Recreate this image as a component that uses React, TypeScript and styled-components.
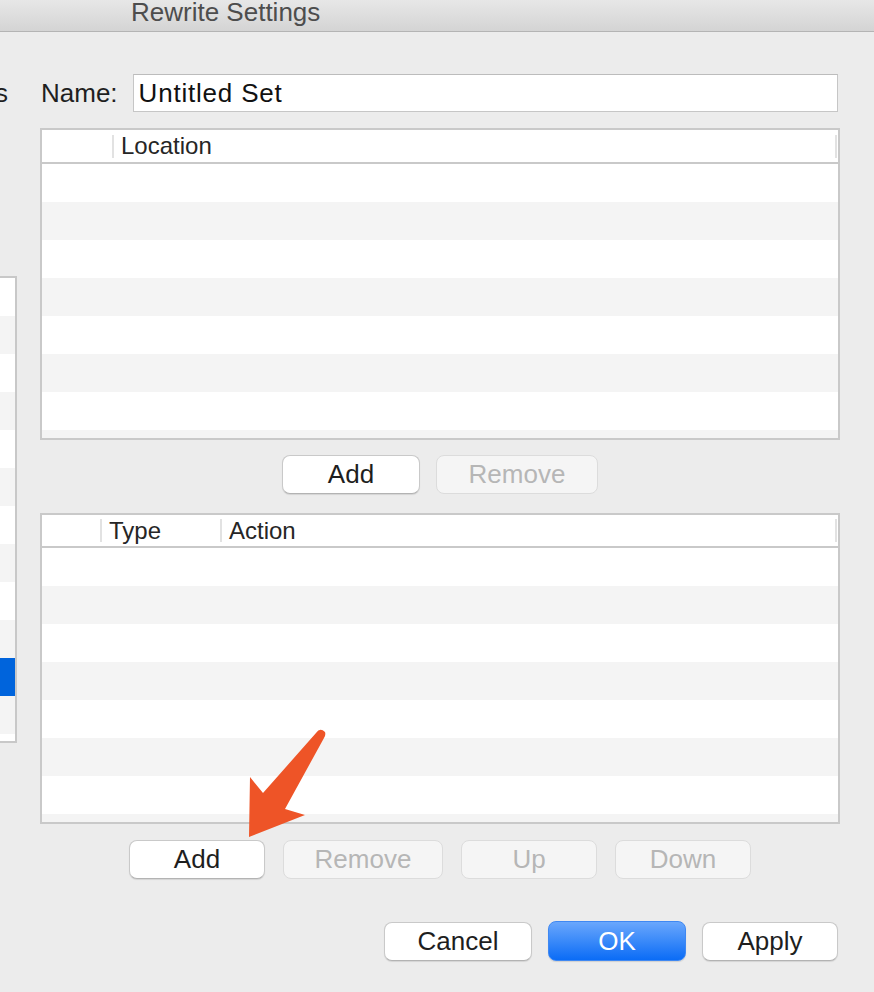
import React from "react";
import styled, { createGlobalStyle, css } from "styled-components";

const Global = createGlobalStyle`
  html, body { margin: 0; padding: 0; background: #ececec; }
  body { font-family: "Liberation Sans", Arial, Helvetica, sans-serif; }
  * { box-sizing: border-box; }
`;

const Window = styled.div`
  position: relative;
  width: 874px;
  height: 992px;
  overflow: hidden;
  background: #ececec;
  display: flex;
  flex-direction: column;
  color: #1f1f1f;
`;

const TitleBar = styled.div`
  height: 32px;
  flex: none;
  background: linear-gradient(#e7e7e7, #d4d4d4);
  border-bottom: 1px solid #b4b4b4;
  padding-left: 131px;
`;

const Title = styled.div`
  font-size: 26px;
  line-height: 24px;
  color: #4d4d4d;
  white-space: nowrap;
`;

const Body = styled.div`
  flex: 1;
  display: flex;
  align-items: flex-start;
`;

const Sidebar = styled.div`
  width: 17px;
  flex: none;
  display: flex;
  flex-direction: column;
  padding-top: 42px;
`;

const SidebarLabel = styled.div`
  width: 8px;
  height: 38px;
  font-size: 26px;
  line-height: 38px;
  text-align: right;
  white-space: nowrap;
  direction: rtl;
`;

const SourceList = styled.div`
  margin-top: 164px;
  width: 17px;
  height: 467px;
  background: #fff;
  border: 2px solid #c8c8c8;
  border-left: none;
  overflow: hidden;
`;

const ListRow = styled.div<{ $alt?: boolean; $selected?: boolean }>`
  height: 38px;
  background: ${(p) => (p.$selected ? "#0064dc" : p.$alt ? "#f4f4f4" : "#ffffff")};
`;

const Main = styled.div`
  margin-left: 23px;
  width: 800px;
  flex: none;
  display: flex;
  flex-direction: column;
  padding-top: 42px;
`;

const NameRow = styled.div`
  display: flex;
  align-items: center;
  height: 38px;
  gap: 15px;
  padding-right: 2px;
`;

const FieldLabel = styled.label`
  font-size: 26px;
  line-height: 38px;
  padding-left: 1px;
  color: #1f1f1f;
`;

const TextField = styled.div`
  flex: 1;
  height: 38px;
  background: #fff;
  border: 1px solid #c6c6c6;
  border-top-color: #bcbcbc;
  padding: 1px 5px 0;
  font-size: 26px;
  line-height: 35px;
  letter-spacing: 0.8px;
  color: #111;
`;

const Table = styled.div<{ $top: number; $height: number }>`
  margin-top: ${(p) => p.$top}px;
  width: 800px;
  height: ${(p) => p.$height}px;
  border: 2px solid #c9c9c9;
  background: #fff;
  display: flex;
  flex-direction: column;
  overflow: hidden;
`;

const Header = styled.div<{ $height: number }>`
  height: ${(p) => p.$height}px;
  flex: none;
  display: flex;
  align-items: center;
  background: #fff;
  border-bottom: 2px solid #c9c9c9;
`;

const HeaderCell = styled.div<{ $width?: number }>`
  ${(p) =>
    p.$width !== undefined
      ? css`
          width: ${p.$width}px;
          flex: none;
        `
      : css`
          flex: 1;
        `}
  font-size: 24px;
  line-height: 32px;
  color: #262626;
  padding-left: 7px;
  white-space: nowrap;
`;

const Spacer = styled.div<{ $width: number }>`
  width: ${(p) => p.$width}px;
  flex: none;
`;

const Separator = styled.div`
  width: 2px;
  height: 23px;
  flex: none;
  background: #e2e2e2;
`;

const TableBody = styled.div`
  flex: 1;
  overflow: hidden;
`;

const TableRow = styled.div<{ $alt?: boolean }>`
  height: 38px;
  background: ${(p) => (p.$alt ? "#f4f4f4" : "#ffffff")};
`;

const ButtonRow = styled.div<{ $top: number; $gap: number; $align?: string }>`
  margin-top: ${(p) => p.$top}px;
  display: flex;
  justify-content: ${(p) => p.$align || "center"};
  align-items: center;
  gap: ${(p) => p.$gap}px;
  padding-right: ${(p) => (p.$align ? 2 : 0)}px;
`;

const Button = styled.button<{ $width: number; $variant?: "default" | "primary" | "disabled" }>`
  width: ${(p) => p.$width}px;
  height: 39px;
  padding: 0;
  border-radius: 8px;
  font-family: "Liberation Sans", Arial, Helvetica, sans-serif;
  font-size: 26px;
  line-height: 37px;
  text-align: center;
  cursor: default;
  ${(p) =>
    p.$variant === "primary"
      ? css`
          height: 40px;
          color: #fff;
          background: linear-gradient(#6aa7fc, #0b6cf6);
          border: 1px solid #3f88f2;
          box-shadow: 0 1px 1px rgba(0, 0, 0, 0.12);
        `
      : p.$variant === "disabled"
      ? css`
          color: #b6b6b6;
          background: #f5f5f5;
          border: 1px solid #dcdcdc;
        `
      : css`
          color: #1e1e1e;
          background: #fff;
          border: 1px solid #c9c9c9;
          border-bottom-color: #b3b3b3;
          box-shadow: 0 1px 1px rgba(0, 0, 0, 0.1);
        `}
`;

const Annotation = styled.svg`
  position: absolute;
  left: 0;
  top: 0;
  width: 874px;
  height: 992px;
  pointer-events: none;
`;

const rows = (n: number) => Array.from({ length: n }, (_, i) => i);

export default function App() {
  return (
    <>
      <Global />
      <Window>
        <TitleBar>
          <Title>Rewrite Settings</Title>
        </TitleBar>
        <Body>
          <Sidebar>
            <SidebarLabel>s</SidebarLabel>
            <SourceList>
              {rows(13).map((i) => (
                <ListRow key={i} $alt={i % 2 === 1} $selected={i === 10} />
              ))}
            </SourceList>
          </Sidebar>
          <Main>
            <NameRow>
              <FieldLabel>Name:</FieldLabel>
              <TextField>Untitled Set</TextField>
            </NameRow>

            <Table $top={16} $height={312}>
              <Header $height={34}>
                <Spacer $width={70} />
                <Separator />
                <HeaderCell>Location</HeaderCell>
                <Separator />
                <Spacer $width={1} />
              </Header>
              <TableBody>
                {rows(8).map((i) => (
                  <TableRow key={i} $alt={i % 2 === 1} />
                ))}
              </TableBody>
            </Table>

            <ButtonRow $top={15} $gap={16}>
              <Button $width={138}>Add</Button>
              <Button $width={162} $variant="disabled">
                Remove
              </Button>
            </ButtonRow>

            <Table $top={19} $height={311}>
              <Header $height={33}>
                <Spacer $width={58} />
                <Separator />
                <HeaderCell $width={118}>Type</HeaderCell>
                <Separator />
                <HeaderCell>Action</HeaderCell>
                <Separator />
                <Spacer $width={1} />
              </Header>
              <TableBody>
                {rows(8).map((i) => (
                  <TableRow key={i} $alt={i % 2 === 1} />
                ))}
              </TableBody>
            </Table>

            <ButtonRow $top={16} $gap={18}>
              <Button $width={136}>Add</Button>
              <Button $width={160} $variant="disabled">
                Remove
              </Button>
              <Button $width={136} $variant="disabled">
                Up
              </Button>
              <Button $width={136} $variant="disabled">
                Down
              </Button>
            </ButtonRow>

            <ButtonRow $top={42} $gap={16} $align="flex-end">
              <Button $width={148}>Cancel</Button>
              <Button $width={138} $variant="primary">
                OK
              </Button>
              <Button $width={136}>Apply</Button>
            </ButtonRow>
          </Main>
        </Body>
        <Annotation viewBox="0 0 874 992">
          <path
            d="M316 733 Q320 727 325 732 Q326 735 324 738 L285 809 L305 815 L249 837 L250 777 L263 793 Z"
            fill="#ee5427"
          />
        </Annotation>
      </Window>
    </>
  );
}
